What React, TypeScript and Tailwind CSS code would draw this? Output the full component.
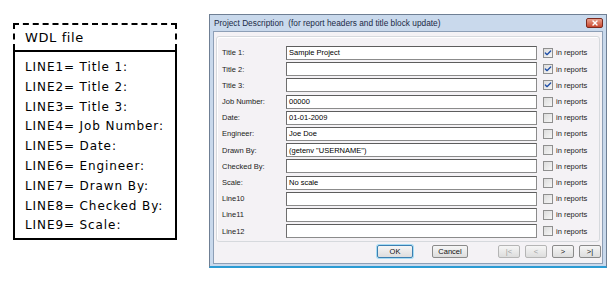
import { Check, X } from "lucide-react"

const wdlLines = [
  ["LINE1=", "Title 1:"],
  ["LINE2=", "Title 2:"],
  ["LINE3=", "Title 3:"],
  ["LINE4=", "Job Number:"],
  ["LINE5=", "Date:"],
  ["LINE6=", "Engineer:"],
  ["LINE7=", "Drawn By:"],
  ["LINE8=", "Checked By:"],
  ["LINE9=", "Scale:"],
]

const rows = [
  { label: "Title 1:", value: "Sample Project", checked: true },
  { label: "Title 2:", value: "", checked: true },
  { label: "Title 3:", value: "", checked: true },
  { label: "Job Number:", value: "00000", checked: false },
  { label: "Date:", value: "01-01-2009", checked: false },
  { label: "Engineer:", value: "Joe Doe", checked: false },
  { label: "Drawn By:", value: '(getenv "USERNAME")', checked: false },
  { label: "Checked By:", value: "", checked: false },
  { label: "Scale:", value: "No scale", checked: false },
  { label: "Line10", value: "", checked: false },
  { label: "Line11", value: "", checked: false },
  { label: "Line12", value: "", checked: false },
]

function WdlBox() {
  return (
    <div className="mt-[23px] ml-[13px] w-[164px] font-['DejaVu_Sans',sans-serif] text-black">
      <div className="h-[27px] border-2 border-b-0 border-dashed border-black pl-[10px] pt-[5px] text-[13px] leading-[16px] tracking-[0.6px]">
        WDL file
      </div>
      <div className="border-2 border-black pl-[10px] pt-[6px] pb-[2px] text-[12px] tracking-[0.9px]">
        {wdlLines.map(([key, name]) => (
          <div key={key} className="h-[19.8px] leading-[19.8px] whitespace-nowrap">
            {key} {name}
          </div>
        ))}
      </div>
    </div>
  )
}

function DlgButton({ children, wide, disabled, primary }: { children: React.ReactNode; wide?: boolean; disabled?: boolean; primary?: boolean }) {
  return (
    <div
      className={
        "flex h-[13px] items-center justify-center rounded-[2px] border bg-gradient-to-b from-[#f6f6f6] to-[#dddddd] text-[7.5px] leading-none " +
        (wide ? "w-[36px] " : "w-[22px] ") +
        (primary ? "border-[#3c7fb1] shadow-[0_0_0_1px_#a6dcf4] " : "border-[#8a8a8a] ") +
        (disabled ? "text-[#a0a0a0] border-[#b5b5b5]" : "text-[#111]")
      }
    >
      {children}
    </div>
  )
}

function ProjectDialog() {
  return (
    <div className="mt-[14px] ml-[32px] flex h-[254px] w-[398px] flex-col border border-[#6f7f94] border-b-2 border-b-[#2c9bd3] bg-[#c9d9ec] px-[3px] pb-[2px] font-['Liberation_Sans',sans-serif]">
      <div className="flex h-[16px] items-center justify-between pl-[1px]">
        <span className="text-[8.3px] text-[#1b2a46] whitespace-nowrap">
          Project Description&nbsp;&nbsp;(for report headers and title block update)
        </span>
        <div className="flex h-[10px] w-[17px] items-center justify-center rounded-[2px] border border-[#7b2a1e] bg-gradient-to-b from-[#e8a08d] to-[#c8442c]">
          <X className="h-[8px] w-[8px] text-white" strokeWidth={4} />
        </div>
      </div>
      <div className="flex flex-1 flex-col border border-[#8d9fb6] bg-[#f4f2f5] px-[2px] pt-[4px]">
        <div className="rounded-[3px] border border-[#d6d9dd] px-[5px] pt-[8px] pb-[2px] shadow-[inset_1px_1px_0_#ffffff]">
          {rows.map((r) => (
            <div key={r.label} className="flex h-[16.2px] items-center text-[7.5px] text-[#222]">
              <span className="w-[64px] whitespace-nowrap">{r.label}</span>
              <div className="flex h-[14px] w-[251px] items-center border border-[#8b8b8b] border-t-[#5d5d5d] border-l-[#6e6e6e] bg-white pl-[2px] text-black">
                {r.value}
              </div>
              <div className="ml-[6px] flex h-[10px] w-[10px] items-center justify-center border border-[#8f8f8f] bg-gradient-to-br from-[#dcdcdc] to-[#f6f6f6]">
                {r.checked && <Check className="h-[8px] w-[8px] text-[#1f4fa8]" strokeWidth={4} />}
              </div>
              <span className="ml-[3px] text-[7.5px] whitespace-nowrap">in reports</span>
            </div>
          ))}
        </div>
        <div className="mt-[3px] flex items-center">
          <div className="ml-[161px]">
            <DlgButton wide primary>OK</DlgButton>
          </div>
          <div className="ml-[19px]">
            <DlgButton wide>Cancel</DlgButton>
          </div>
          <div className="ml-[30px] flex gap-[5px]">
            <DlgButton disabled>|&lt;</DlgButton>
            <DlgButton disabled>&lt;</DlgButton>
            <DlgButton>&gt;</DlgButton>
            <DlgButton>&gt;|</DlgButton>
          </div>
        </div>
      </div>
    </div>
  )
}

export default function App() {
  return (
    <div className="flex h-[286px] w-[613px] items-start bg-white">
      <WdlBox />
      <ProjectDialog />
    </div>
  )
}
